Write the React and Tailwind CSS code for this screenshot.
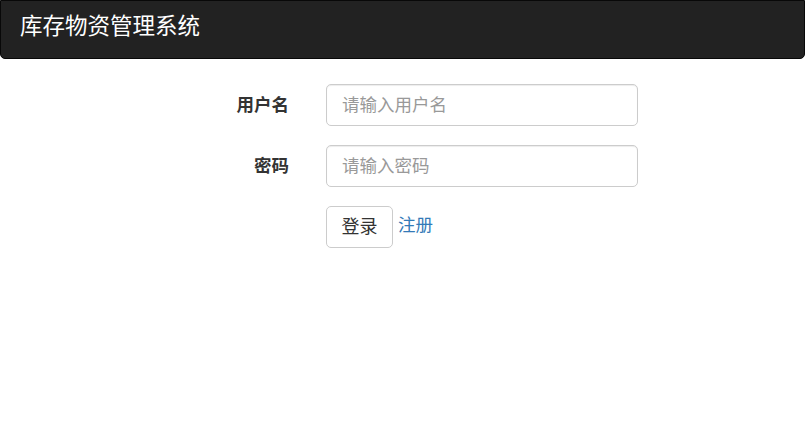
export default function App() {
  const font = { fontFamily: '"Liberation Sans", "Noto Sans CJK SC", sans-serif' };
  return (
    <div className="w-[805px] h-[437px] bg-white" style={font}>
      <nav className="h-[59px] bg-[#222222] border border-[#080808] rounded-b-[5px] flex items-center pl-[19px]">
        <span className="text-white text-[22.5px] leading-[26px] -mt-[6px]">库存物资管理系统</span>
      </nav>
      <div className="pt-[25px] flex flex-col gap-[19px]">
        <div className="flex items-center">
          <div className="w-[326px] pr-[37px] text-right font-bold text-[17.5px] text-[#333333] leading-[20px]">用户名</div>
          <input
            className="w-[312px] h-[42px] border border-[#cccccc] rounded-[5px] px-[15px] text-[17.5px] text-[#555555] placeholder:text-[#999999] outline-none shadow-[inset_0_1px_1px_rgba(0,0,0,0.075)]"
            placeholder="请输入用户名"
          />
        </div>
        <div className="flex items-center">
          <div className="w-[326px] pr-[37px] text-right font-bold text-[17.5px] text-[#333333] leading-[20px]">密码</div>
          <input
            type="password"
            className="w-[312px] h-[42px] border border-[#cccccc] rounded-[5px] px-[15px] text-[17.5px] text-[#555555] placeholder:text-[#999999] outline-none shadow-[inset_0_1px_1px_rgba(0,0,0,0.075)]"
            placeholder="请输入密码"
          />
        </div>
        <div className="flex items-center pl-[326px] gap-[5px]">
          <button className="w-[67px] h-[42px] border border-[#cccccc] rounded-[5px] bg-white text-[18px] text-[#333333]">登录</button>
          <a className="text-[17.5px] text-[#337ab7] -mt-[4px]">注册</a>
        </div>
      </div>
    </div>
  );
}
